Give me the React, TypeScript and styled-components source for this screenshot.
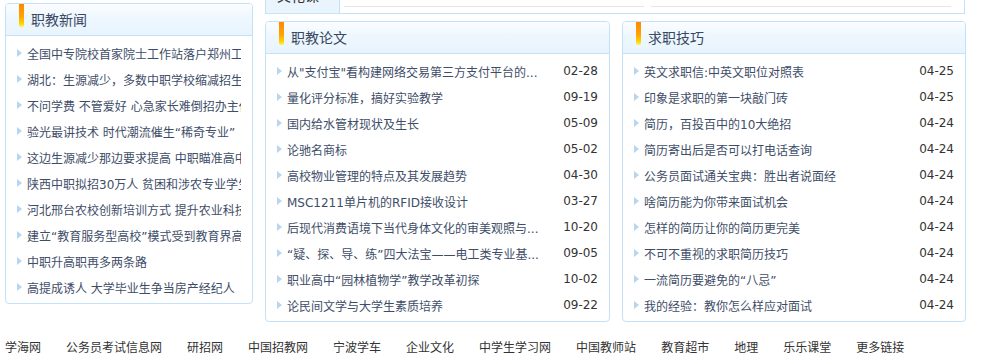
import styled, { createGlobalStyle } from 'styled-components'

const GlobalStyle = createGlobalStyle`
  html, body {
    margin: 0;
    padding: 0;
    background: #fff;
    overflow: hidden;
  }
  body {
    font-family: 'DejaVu Sans', 'Noto Sans CJK SC', sans-serif;
    font-size: 12px;
    color: #333;
  }
`

type Item = { title: string; date?: string }

const newsItems: Item[] = [
  { title: '全国中专院校首家院士工作站落户郑州工业学校' },
  { title: '湖北：生源减少，多数中职学校缩减招生计划' },
  { title: '不问学费 不管爱好 心急家长难倒招办主任' },
  { title: '验光最讲技术 时代潮流催生“稀奇专业”' },
  { title: '这边生源减少那边要求提高 中职瞄准高中生' },
  { title: '陕西中职拟招30万人 贫困和涉农专业学生免学费' },
  { title: '河北邢台农校创新培训方式 提升农业科技水平' },
  { title: '建立“教育服务型高校”模式受到教育界高度关注' },
  { title: '中职升高职再多两条路' },
  { title: '高提成诱人 大学毕业生争当房产经纪人' },
]

const paperItems: Item[] = [
  { title: '从"支付宝"看构建网络交易第三方支付平台的...', date: '02-28' },
  { title: '量化评分标准，搞好实验教学', date: '09-19' },
  { title: '国内给水管材现状及生长', date: '05-09' },
  { title: '论驰名商标', date: '05-02' },
  { title: '高校物业管理的特点及其发展趋势', date: '04-30' },
  { title: 'MSC1211单片机的RFID接收设计', date: '03-27' },
  { title: '后现代消费语境下当代身体文化的审美观照与...', date: '10-20' },
  { title: '“疑、探、导、练”四大法宝——电工类专业基...', date: '09-05' },
  { title: '职业高中“园林植物学”教学改革初探', date: '10-02' },
  { title: '论民间文学与大学生素质培养', date: '09-22' },
]

const jobItems: Item[] = [
  { title: '英文求职信:中英文职位对照表', date: '04-25' },
  { title: '印象是求职的第一块敲门砖', date: '04-25' },
  { title: '简历，百投百中的10大绝招', date: '04-24' },
  { title: '简历寄出后是否可以打电话查询', date: '04-24' },
  { title: '公务员面试通关宝典：胜出者说面经', date: '04-24' },
  { title: '啥简历能为你带来面试机会', date: '04-24' },
  { title: '怎样的简历让你的简历更完美', date: '04-24' },
  { title: '不可不重视的求职简历技巧', date: '04-24' },
  { title: '一流简历要避免的“八忌”', date: '04-24' },
  { title: '我的经验：教你怎么样应对面试', date: '04-24' },
]

const links = [
  '学海网',
  '公务员考试信息网',
  '研招网',
  '中国招教网',
  '宁波学车',
  '企业文化',
  '中学生学习网',
  '中国教师站',
  '教育超市',
  '地理',
  '乐乐课堂',
  '更多链接',
]

const Panel = ({ title, items, width }: { title: string; items: Item[]; width: number }) => (
  <PanelBox $width={width}>
    <PanelHead>
      <OrangeBar />
      <PanelTitle>{title}</PanelTitle>
    </PanelHead>
    <List>
      {items.map((item) => (
        <Row key={item.title}>
          <Bullet />
          <RowTitle>{item.title}</RowTitle>
          {item.date ? <RowDate>{item.date}</RowDate> : null}
        </Row>
      ))}
    </List>
  </PanelBox>
)

const App = () => {
  return (
    <>
      <GlobalStyle />
      <Page>
        <Columns>
          <LeftCol>
            <Panel title='职教新闻' items={newsItems} width={248} />
          </LeftCol>
          <RightArea>
            <TabStrip>
              <Tab>文化课</Tab>
              <TabLine />
              <TabLine $wide />
            </TabStrip>
            <PanelPair>
              <Panel title='职教论文' items={paperItems} width={345} />
              <Panel title='求职技巧' items={jobItems} width={344} />
            </PanelPair>
          </RightArea>
        </Columns>
        <Footer>
          {links.map((link) => (
            <FooterLink key={link}>{link}</FooterLink>
          ))}
        </Footer>
      </Page>
    </>
  )
}
export default App

const Page = styled.div`
  width: 982px;
  padding-left: 5px;
  box-sizing: border-box;
`
const Columns = styled.div`
  display: flex;
  align-items: flex-start;
  gap: 12px;
`
const LeftCol = styled.div`
  padding-top: 3px;
`
const RightArea = styled.div`
  display: flex;
  flex-direction: column;
  gap: 7px;
`
const TabStrip = styled.div`
  width: 700px;
  height: 30px;
  margin-top: -16px;
  box-sizing: border-box;
  border: 1px solid #c4e2f8;
  display: flex;
  align-items: flex-start;
`
const Tab = styled.div`
  width: 74px;
  height: 100%;
  box-sizing: border-box;
  background: #e9f4fd;
  border-right: 1px solid #c4e0f4;
  font-size: 14px;
  color: #333;
  padding: 0 0 0 11px;
  line-height: 20px;
  font-family: 'Noto Sans CJK SC', sans-serif;
`
const TabLine = styled.div<{ $wide?: boolean }>`
  margin-top: 21px;
  margin-left: ${(p) => (p.$wide ? '7px' : '4px')};
  width: ${(p) => (p.$wide ? '300px' : '300px')};
  height: 1px;
  background: #e6e6e6;
`
const PanelPair = styled.div`
  display: flex;
  gap: 12px;
`
const PanelBox = styled.div<{ $width: number }>`
  width: ${(p) => p.$width}px;
  box-sizing: border-box;
  border: 1px solid #c3e1f8;
  border-radius: 4px;
  overflow: hidden;
  background: #fff;
`
const PanelHead = styled.div`
  height: 31px;
  display: flex;
  align-items: flex-start;
  padding-left: 13px;
  background: linear-gradient(to bottom, #fbfdff 0%, #eef7fe 45%, #e8f4fd 100%);
  border-bottom: 1px solid #c4e1f7;
`
const OrangeBar = styled.div`
  width: 5px;
  height: 23px;
  border-radius: 0 0 2px 2px;
  background: linear-gradient(to bottom, #ff8800 0%, #ffa400 55%, #ffd500 85%, #fff066 100%);
`
const PanelTitle = styled.div`
  margin-left: 7px;
  line-height: 31px;
  font-size: 14px;
  color: #3a4862;
  font-family: 'Noto Sans CJK SC', sans-serif;
`
const List = styled.div`
  padding: 4px 0 3px;
`
const Row = styled.div`
  height: 26px;
  display: flex;
  align-items: center;
  padding: 0 11px 0 11px;
`
const Bullet = styled.span`
  flex: none;
  width: 0;
  height: 0;
  border-left: 5px solid #b8d6ef;
  border-top: 4px solid transparent;
  border-bottom: 4px solid transparent;
  margin-right: 5px;
`
const RowTitle = styled.span`
  flex: 1;
  min-width: 0;
  white-space: nowrap;
  overflow: hidden;
  color: #3e4d68;
`
const RowDate = styled.span`
  flex: none;
  margin-left: 12px;
  color: #333;
`
const Footer = styled.div`
  display: flex;
  margin-top: 18px;
  line-height: 16px;
`
const FooterLink = styled.span`
  margin-right: 25px;
  color: #333;
  white-space: nowrap;
`
